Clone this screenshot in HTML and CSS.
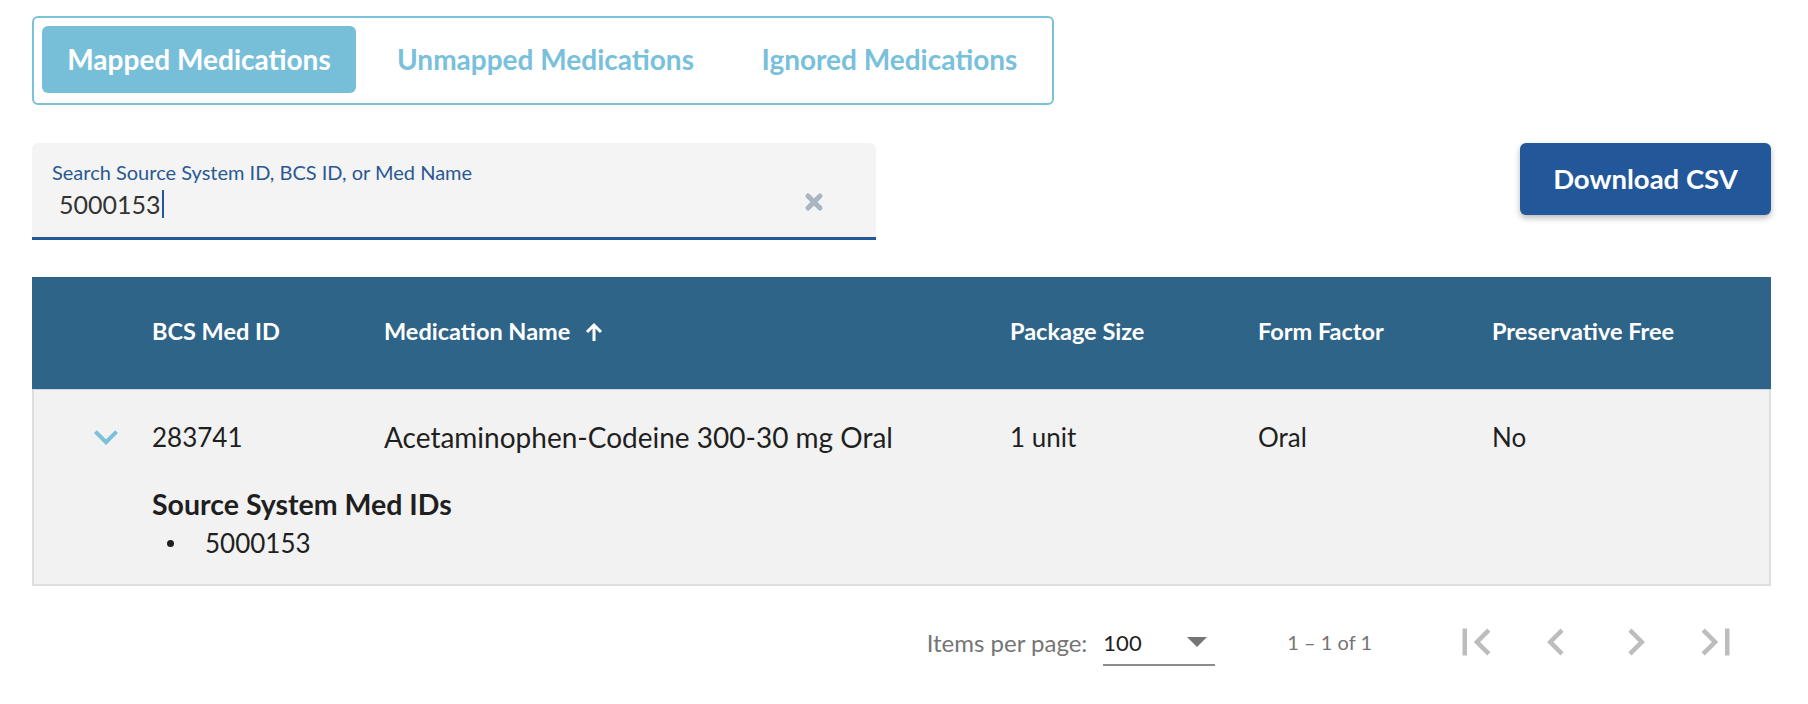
FILE: index.html
```html
<!DOCTYPE html>
<html lang="en">
<head>
<meta charset="utf-8">
<title>Medications</title>
<link rel="stylesheet" href="styles.css">
</head>
<body>
<div class="page">
  <div class="tabs">
    <div class="tab tab-mapped active">Mapped Medications</div>
    <div class="tab tab-unmapped">Unmapped Medications</div>
    <div class="tab tab-ignored">Ignored Medications</div>
  </div>

  <div class="toolbar">
    <div class="search">
      <div class="search-label">Search Source System ID, BCS ID, or Med Name</div>
      <div class="search-input">
        <span class="search-value">5000153</span><span class="caret"></span>
        <svg class="clear" viewBox="0 0 20 20" width="20" height="20"><path d="M4 4L16 16M16 4L4 16" stroke="currentColor" stroke-width="5" stroke-linecap="round"/></svg>
      </div>
    </div>
    <button class="download">Download CSV</button>
  </div>

  <div class="table">
    <div class="grid thead">
      <div></div>
      <div>BCS Med ID</div>
      <div class="sortable">Medication Name <svg class="sort-arrow" viewBox="0 0 24 24" width="24" height="24"><path d="M12 21V5M5 12l7-7 7 7" fill="none" stroke="currentColor" stroke-width="3"/></svg></div>
      <div>Package Size</div>
      <div>Form Factor</div>
      <div>Preservative Free</div>
    </div>
    <div class="row">
      <div class="grid line">
        <div class="toggle"><svg viewBox="0 0 24 24" width="48" height="48"><path fill="currentColor" d="M16.59 8.59L12 13.17 7.41 8.59 6 10l6 6 6-6z"/></svg></div>
        <div>283741</div>
        <div class="name">Acetaminophen-Codeine 300-30 mg Oral</div>
        <div>1 unit</div>
        <div>Oral</div>
        <div>No</div>
      </div>
      <div class="detail">
        <div class="detail-title">Source System Med IDs</div>
        <ul class="ids">
          <li>5000153</li>
        </ul>
      </div>
    </div>
  </div>

  <div class="paginator">
    <span class="ipp-label">Items per page:</span>
    <div class="select">
      <span class="select-value">100</span>
      <svg class="select-arrow" viewBox="0 0 20 10" width="20" height="10"><path fill="currentColor" d="M0 0h20L10 10z"/></svg>
    </div>
    <span class="range">1 – 1 of 1</span>
    <div class="pager-buttons">
      <span class="pbtn"><svg viewBox="0 0 24 24" width="54" height="54"><path fill="currentColor" d="M18.41 16.59L13.82 12l4.59-4.59L17 6l-6 6 6 6zM6 6h2v12H6z"/></svg></span>
      <span class="pbtn"><svg viewBox="0 0 24 24" width="54" height="54"><path fill="currentColor" d="M15.41 7.41L14 6l-6 6 6 6 1.41-1.41L10.83 12z"/></svg></span>
      <span class="pbtn"><svg viewBox="0 0 24 24" width="54" height="54"><path fill="currentColor" d="M10 6L8.59 7.41 13.17 12l-4.58 4.59L10 18l6-6z"/></svg></span>
      <span class="pbtn"><svg viewBox="0 0 24 24" width="54" height="54"><path fill="currentColor" d="M5.59 7.41L10.18 12l-4.59 4.59L7 18l6-6-6-6zM16 6h2v12h-2z"/></svg></span>
    </div>
  </div>
</div>
</body>
</html>
```

FILE: styles.css
```css
* { box-sizing: border-box; }

body {
  margin: 0;
  background: #ffffff;
  font-family: Lato, "Noto Sans", "Liberation Sans", sans-serif;
  color: #1f1f1f;
}

.page {
  padding: 16px 37px 0 32px;
}

/* Tabs */
.tabs {
  display: inline-flex;
  gap: 14px;
  padding: 8px 8px 10px;
  border: 2px solid #7cc1da;
  border-radius: 6px;
}

.tab {
  height: 67px;
  display: flex;
  align-items: center;
  justify-content: center;
  font-size: 28px;
  font-weight: 700;
  color: #79c0da;
  border-radius: 6px;
  padding-bottom: 2px;
}

.tab-mapped { width: 314px; }
.tab-unmapped { width: 351px; }
.tab-ignored { width: 309px; }

.tab.active {
  background: #77bfd9;
  color: #ffffff;
}

/* Toolbar */
.toolbar {
  display: flex;
  justify-content: space-between;
  align-items: flex-start;
  margin-top: 38px;
}

.search {
  width: 844px;
  height: 97px;
  background: #f4f4f4;
  border-bottom: 3px solid #23569a;
  border-radius: 6px 6px 0 0;
  padding: 17px 0 0 20px;
}

.search-label {
  font-size: 20px;
  line-height: 24px;
  color: #2a5992;
}

.search-input {
  display: flex;
  align-items: center;
  margin-top: 4px;
  padding-left: 7px;
  height: 32px;
  font-size: 25px;
  color: #333333;
}

.caret {
  width: 2px;
  height: 28px;
  background: #23569a;
  margin-left: 1px;
}

.clear {
  margin-left: auto;
  margin-right: 52px;
  margin-top: -5px;
  color: #a9b5c0;
}

.download {
  width: 251px;
  height: 72px;
  border: none;
  border-radius: 6px;
  background: #22579a;
  color: #ffffff;
  font-family: Lato, "Noto Sans", sans-serif;
  font-size: 27.5px;
  font-weight: 700;
  padding-bottom: 2px;
  box-shadow: 0 3px 6px rgba(0, 0, 0, 0.28);
}

/* Table */
.table {
  margin-top: 37px;
}

.grid {
  display: grid;
  grid-template-columns: 120px 232px 626px 248px 234px 1fr;
  align-items: center;
}

.thead {
  height: 112px;
  background: #2f6489;
  color: #ffffff;
  font-size: 23.5px;
  font-weight: 700;
  padding-bottom: 4px;
}

.sortable {
  display: flex;
  align-items: center;
}

.sort-arrow {
  margin-left: 12px;
  margin-top: 1px;
}

.row {
  background: #f2f2f2;
  border-top: 1px solid #c9d6e0;
  box-shadow: inset 2px 0 #dedede, inset -2px 0 #dedede, inset 0 -2px #dedede;
  padding-bottom: 27px;
}

.line {
  height: 93px;
  font-size: 26px;
  color: #1f1f1f;
}

.line .name {
  font-size: 28px;
}

.toggle {
  padding-left: 50px;
  height: 48px;
  color: #7cc1da;
}

.toggle svg { display: block; }

.detail {
  padding-left: 120px;
}

.detail-title {
  margin-top: 5px;
  font-size: 28.5px;
  font-weight: 700;
  line-height: 32px;
  color: #1f1f1f;
}

.ids {
  list-style: none;
  margin: 7px 0 0;
  padding: 0;
}

.ids li {
  display: flex;
  align-items: center;
  font-size: 26px;
  line-height: 32px;
}

.ids li::before {
  content: "";
  width: 7px;
  height: 7px;
  border-radius: 50%;
  background: #1f1f1f;
  margin-left: 15px;
  margin-right: 31px;
}

/* Paginator */
.paginator {
  display: flex;
  justify-content: flex-end;
  align-items: center;
  height: 112px;
  padding-right: 15px;
  color: #757575;
  font-size: 20px;
}

.ipp-label {
  font-size: 24px;
}

.select {
  display: flex;
  align-items: center;
  justify-content: space-between;
  width: 112px;
  height: 48px;
  margin-left: 16px;
  border-bottom: 2px solid #8c8c8c;
  padding-top: 2px;
}

.select-value {
  font-size: 22px;
  color: #1f1f1f;
}

.select-arrow {
  margin-right: 8px;
  color: #757575;
}

.range {
  margin-left: 72px;
}

.pager-buttons {
  display: flex;
  margin-left: 64px;
}

.pbtn {
  width: 80px;
  display: flex;
  justify-content: center;
  color: #bdbdbd;
}

.pbtn svg { display: block; }
```
